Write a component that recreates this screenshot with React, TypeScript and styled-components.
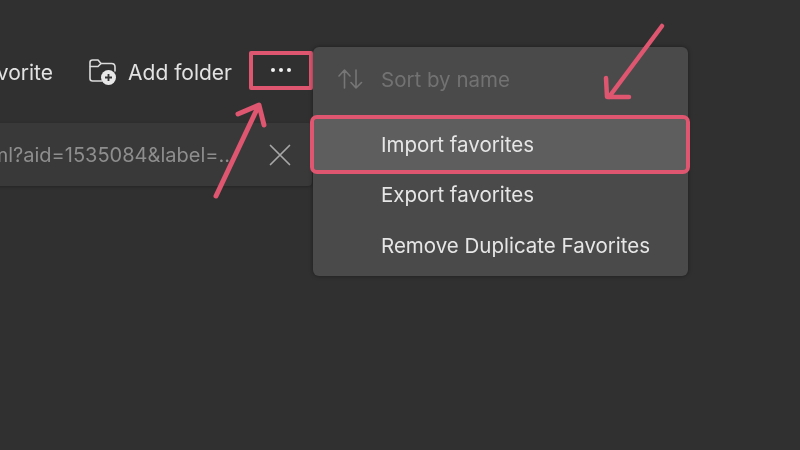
import React from "react";
import styled, { createGlobalStyle } from "styled-components";

const Global = createGlobalStyle`
  html, body { margin: 0; padding: 0; background: #303030; }
  body { font-family: Inter, "Liberation Sans", sans-serif; }
`;

const Page = styled.div`
  position: relative;
  width: 800px;
  height: 450px;
  overflow: hidden;
  background: #303030;
  display: flex;
  align-items: flex-start;
  padding-top: 47px;
  box-sizing: border-box;
  filter: blur(0.45px);
`;

const LeftColumn = styled.div`
  width: 313px;
  flex: none;
  display: flex;
  flex-direction: column;
  align-items: flex-end;
`;

const Toolbar = styled.div`
  display: flex;
  align-items: center;
  height: 50px;
  white-space: nowrap;
`;

const ToolbarAction = styled.div<{ $mr: number }>`
  display: flex;
  align-items: center;
  gap: 11px;
  color: #e2e2e2;
  font-size: 21px;
  margin-right: ${(p) => p.$mr}px;
`;

const MoreButton = styled.div`
  width: 64px;
  height: 39px;
  box-sizing: border-box;
  border: 4px solid #de5670;
  border-radius: 2px;
  display: flex;
  align-items: center;
  justify-content: center;
  gap: 4px;
  margin-top: -3px;
`;

const Dot = styled.span`
  width: 4px;
  height: 4px;
  border-radius: 50%;
  background: #f2f2f2;
  position: relative;
  top: -1px;
`;

const UrlBar = styled.div`
  width: 313px;
  height: 63px;
  margin-top: 26px;
  margin-right: 1px;
  box-sizing: border-box;
  background: #393939;
  border-radius: 0 4px 4px 0;
  display: flex;
  align-items: center;
  justify-content: flex-end;
  gap: 39px;
  padding-right: 21px;
  box-shadow: 0 1px 3px rgba(0, 0, 0, 0.25);
  overflow: hidden;
`;

const UrlText = styled.span`
  color: #8e8e8e;
  font-size: 20px;
  white-space: nowrap;
  flex: none;
`;

const Menu = styled.div`
  width: 375px;
  height: 229px;
  flex: none;
  box-sizing: border-box;
  background: #4a4a4a;
  border-radius: 6px;
  padding: 7px 0;
  box-shadow: 0 0 4px rgba(0, 0, 0, 0.4);
  display: flex;
  flex-direction: column;
`;

const MenuItem = styled.div<{ $muted?: boolean; $active?: boolean }>`
  height: ${(p) => (p.$active ? 51 : 50.5)}px;
  flex: none;
  display: flex;
  align-items: center;
  box-sizing: border-box;
  padding-left: ${(p) => (p.$active ? 24 : 25)}px;
  gap: 18px;
  font-size: 20.5px;
  color: ${(p) => (p.$muted ? "#727272" : "#e6e6e6")};
  background: ${(p) => (p.$active ? "#5e5e5e" : "transparent")};
  border-radius: ${(p) => (p.$active ? "3px" : "0")};
  outline: ${(p) => (p.$active ? "4px solid #de5670" : "none")};
  margin-top: ${(p) => (p.$active ? "14px" : "0")};
  margin-left: ${(p) => (p.$active ? "1px" : "0")};
  width: ${(p) => (p.$active ? "372px" : "auto")};
`;

const IconSlot = styled.span`
  width: 25px;
  height: 25px;
  flex: none;
  display: block;
`;

const Annotation = styled.svg`
  position: absolute;
  left: 0;
  top: 0;
  pointer-events: none;
`;

const FolderIcon = () => (
  <svg width="28" height="26" viewBox="0 0 28 26" fill="none">
    <path
      d="M13 22H3.5C2 22 1 21 1 19.5V3.5C1 2 2 1 3.5 1H9l3 3.5h10.5C24.5 4.5 26 6 26 8v4"
      stroke="#dcdcdc"
      strokeWidth="1.6"
      strokeLinejoin="round"
      strokeLinecap="round"
    />
    <path d="M1.5 7.5H9L12 4.5" stroke="#dcdcdc" strokeWidth="1.6" strokeLinecap="round" strokeLinejoin="round" />
    <circle cx="19.5" cy="18.5" r="7.5" fill="#e8e8e8" />
    <path d="M19.5 15v7M16 18.5h7" stroke="#333" strokeWidth="1.8" />
  </svg>
);

const CloseIcon = () => (
  <svg width="22" height="22" viewBox="0 0 22 22" fill="none" style={{ flex: "none" }}>
    <path d="M1.5 1.5l19 19M20.5 1.5l-19 19" stroke="#a8a8a8" strokeWidth="1.7" strokeLinecap="round" />
  </svg>
);

const SortIcon = () => (
  <svg width="25" height="25" viewBox="0 0 25 25" fill="none">
    <path
      d="M6.5 21V3.5M1 9L6.5 3l5.5 6M18 3v18M13 15.5L18 21l5.5-5.5"
      stroke="#767676"
      strokeWidth="1.6"
      strokeLinecap="round"
      strokeLinejoin="round"
    />
  </svg>
);

export default function App() {
  return (
    <>
      <Global />
      <Page>
        <LeftColumn>
          <Toolbar>
            <ToolbarAction $mr={36}>Add favorite</ToolbarAction>
            <ToolbarAction $mr={17}>
              <FolderIcon />
              Add folder
            </ToolbarAction>
            <MoreButton>
              <Dot />
              <Dot />
              <Dot />
            </MoreButton>
          </Toolbar>
          <UrlBar>
            <UrlText>ml?aid=1535084&amp;label=..</UrlText>
            <CloseIcon />
          </UrlBar>
        </LeftColumn>
        <Menu>
          <MenuItem $muted>
            <SortIcon />
            Sort by name
          </MenuItem>
          <MenuItem $active>
            <IconSlot />
            Import favorites
          </MenuItem>
          <MenuItem>
            <IconSlot />
            Export favorites
          </MenuItem>
          <MenuItem>
            <IconSlot />
            Remove Duplicate Favorites
          </MenuItem>
        </Menu>
        <Annotation width="800" height="450" viewBox="0 0 800 450" fill="none">
          <path
            d="M216 196L258 107M238 114L259 105L264 125"
            stroke="#de5670"
            strokeWidth="5"
            strokeLinecap="round"
            strokeLinejoin="round"
          />
          <path
            d="M662 26L609 97M606 78L607 97L629 97"
            stroke="#de5670"
            strokeWidth="4.5"
            strokeLinecap="round"
            strokeLinejoin="round"
          />
        </Annotation>
      </Page>
    </>
  );
}
